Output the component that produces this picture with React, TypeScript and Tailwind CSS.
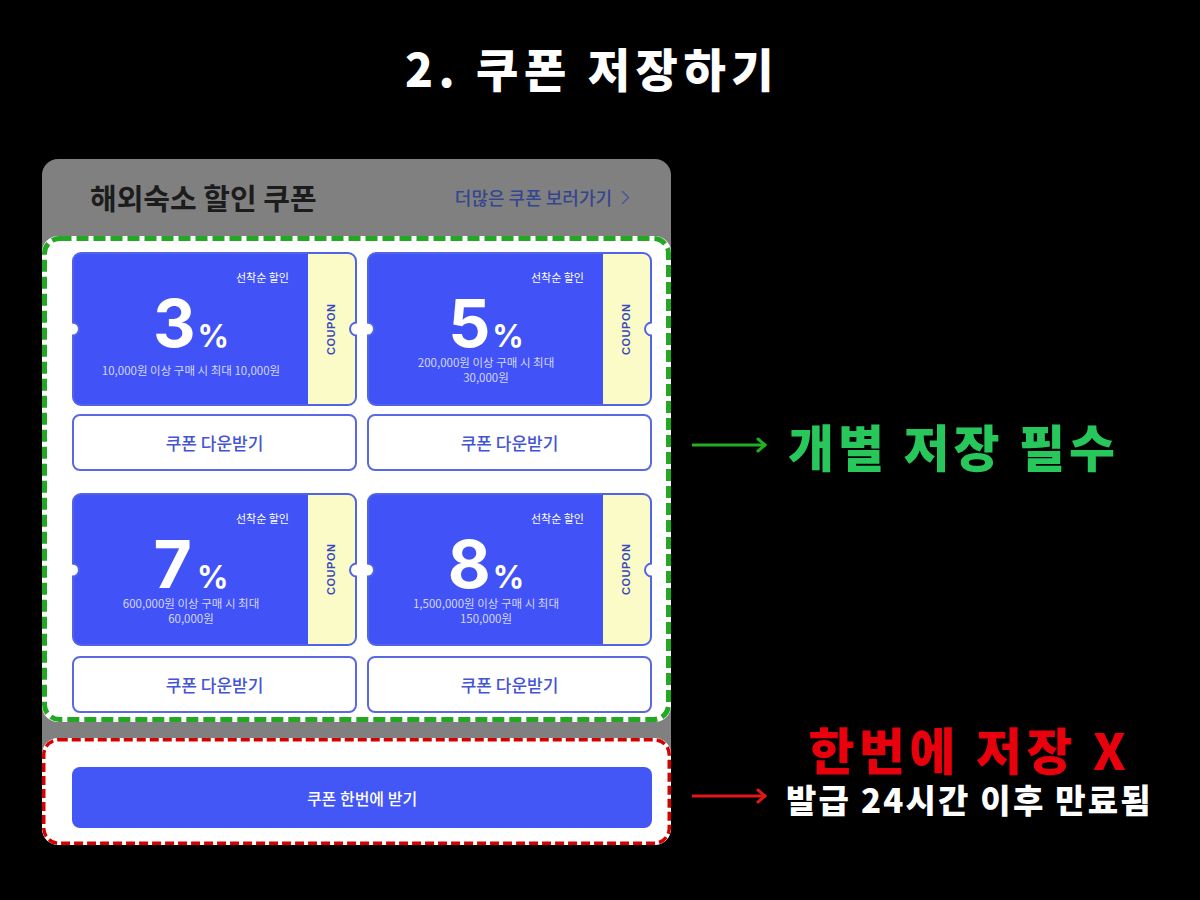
import React from "react";

const KR = { fontFamily: '"Noto Sans CJK KR", "Noto Sans", sans-serif' };
const NUM = { fontFamily: 'Inter, "Noto Sans CJK KR", sans-serif' };

type Coupon = { pct: string; lines: string[]; gap?: boolean };

const coupons: Coupon[] = [
  { pct: "3", lines: ["10,000원 이상 구매 시 최대 10,000원"] },
  { pct: "5", lines: ["200,000원 이상 구매 시 최대", "30,000원"] },
  { pct: "7", lines: ["600,000원 이상 구매 시 최대", "60,000원"], gap: true },
  { pct: "8", lines: ["1,500,000원 이상 구매 시 최대", "150,000원"] },
];

function Notch({ side }: { side: "left" | "right" }) {
  return side === "left" ? (
    <>
      <div className="absolute left-[-9px] top-1/2 -translate-y-1/2 w-[15px] h-[15px] rounded-full bg-white border-2 border-[#5264e6] z-10" />
      <div className="absolute left-[-10px] top-1/2 -translate-y-1/2 w-[8px] h-[18px] bg-white z-20" />
    </>
  ) : (
    <>
      <div className="absolute right-[-9px] top-1/2 -translate-y-1/2 w-[15px] h-[15px] rounded-full bg-white border-2 border-[#5264e6] z-10" />
      <div className="absolute right-[-10px] top-1/2 -translate-y-1/2 w-[8px] h-[18px] bg-white z-20" />
    </>
  );
}

function Ticket({ c, h }: { c: Coupon; h: string }) {
  return (
    <div className={`relative ${h} rounded-[9px] border-2 border-[#5264e6] bg-[#4152f6] flex`}>
      <Notch side="left" />
      <Notch side="right" />
      <div className="flex-1 flex flex-col pt-[15px]" style={KR}>
        <div className="text-right pr-[19px] text-[11px] leading-[16px] text-white">선착순 할인</div>
        <div className="flex items-baseline justify-center mt-[7px] h-[62px]" style={NUM}>
          <span className="text-[66px] leading-[62px] font-bold text-white">{c.pct}</span>
          <span className={`text-[31px] leading-[24px] font-bold text-white ${c.gap ? "ml-[5px]" : "ml-[2px]"}`}>%</span>
        </div>
        <div className="h-[32px] flex flex-col items-center justify-center text-center text-[11.5px] leading-[15px] text-[#d3d7ff]">
          {c.lines.map((l) => (
            <div key={l}>{l}</div>
          ))}
        </div>
      </div>
      <div className="w-[47px] bg-[#fbfbc8] rounded-r-[7px] flex items-center justify-center">
        <span
          className="-rotate-90 text-[11px] font-bold tracking-[0.5px] text-[#3a48bb] whitespace-nowrap"
          style={{ fontFamily: '"Liberation Sans", Arial, sans-serif' }}
        >
          COUPON
        </span>
      </div>
    </div>
  );
}

function DownButton() {
  return (
    <div
      className="h-[57px] rounded-[8px] border-2 border-[#5a69e2] bg-white flex items-center justify-center text-[17px] text-[#4654d4] font-medium"
      style={KR}
    >
      쿠폰 다운받기
    </div>
  );
}

function Arrow({ color }: { color: string }) {
  return (
    <svg width="76" height="16" viewBox="0 0 76 16" fill="none">
      <path d="M1 8H73" stroke={color} strokeWidth="3" strokeLinecap="round" />
      <path d="M66 2L73 8L66 14" stroke={color} strokeWidth="3" strokeLinecap="round" strokeLinejoin="round" />
    </svg>
  );
}

// dashed outline drawn over a box of known size
function DashedFrame({ w, h, stroke, width, dash, r }: { w: number; h: number; stroke: string; width: number; dash: string; r: number }) {
  const i = width / 2;
  return (
    <svg className="absolute inset-0 pointer-events-none" width={w} height={h} viewBox={`0 0 ${w} ${h}`} fill="none">
      <rect x={i} y={i} width={w - width} height={h - width} rx={r} stroke={stroke} strokeWidth={width} strokeDasharray={dash} />
    </svg>
  );
}

export default function App() {
  return (
    <div className="w-[1200px] h-[900px] bg-black overflow-hidden" style={KR}>
      <h1 className="pt-[35px] pr-[16px] text-center text-[46px] leading-[64px] font-black text-white tracking-[5.5px]">
        2. 쿠폰 저장하기
      </h1>

      <div className="flex mt-[60px]">
        {/* coupon panel */}
        <div className="ml-[42px] w-[629px] bg-[#808080] rounded-[16px] overflow-hidden">
          <div className="h-[77px] flex items-center justify-between pl-[48px] pr-[41px]">
            <span className="text-[29px] font-bold text-[#1c1c1c] leading-none">해외숙소 할인 쿠폰</span>
            <span className="flex items-center gap-[9px] text-[18px] text-[#34468f] font-medium">
              더많은 쿠폰 보러가기
              <svg width="9" height="15" viewBox="0 0 9 15" fill="none">
                <path d="M1.5 1.5L7.5 7.5L1.5 13.5" stroke="#4a5a96" strokeWidth="1.6" strokeLinecap="round" strokeLinejoin="round" />
              </svg>
            </span>
          </div>

          <div className="relative h-[486px] bg-white rounded-[16px] pl-[30px] pr-[19px] pt-[16px]">
            <DashedFrame w={629} h={486} stroke="#22a822" width={5} dash="12 5" r={15} />
            <div className="grid grid-cols-2 gap-x-[10px]">
              <div className="flex flex-col gap-[8px]">
                <Ticket c={coupons[0]} h="h-[154px]" />
                <DownButton />
              </div>
              <div className="flex flex-col gap-[8px]">
                <Ticket c={coupons[1]} h="h-[154px]" />
                <DownButton />
              </div>
            </div>
            <div className="grid grid-cols-2 gap-x-[10px] mt-[22px]">
              <div className="flex flex-col gap-[10px]">
                <Ticket c={coupons[2]} h="h-[153px]" />
                <DownButton />
              </div>
              <div className="flex flex-col gap-[10px]">
                <Ticket c={coupons[3]} h="h-[153px]" />
                <DownButton />
              </div>
            </div>
          </div>

          <div className="h-[16px]" />

          <div className="relative bg-white rounded-[16px] h-[107px] pl-[30px] pr-[19px] pt-[29px]">
            <DashedFrame w={629} h={107} stroke="#d60000" width={3.5} dash="9 4" r={15} />
            <div className="h-[61px] rounded-[8px] bg-[#4356f6] flex items-center justify-center text-[16px] text-white font-medium">
              쿠폰 한번에 받기
            </div>
          </div>
        </div>

        {/* annotations */}
        <div className="pl-[21px] flex flex-col">
          <div className="mt-[261px] h-[50px] flex items-center">
            <Arrow color="#22b022" />
            <span className="ml-[20px] text-[50px] leading-[50px] font-black text-[#27c75c] tracking-[4px]">
              개별 저장 필수
            </span>
          </div>

          <div className="mt-[253px] flex items-end">
            <div className="mb-[12px]">
              <Arrow color="#e01818" />
            </div>
            <div className="ml-[18px] flex flex-col items-center">
              <span className="text-[50px] leading-[50px] font-black text-[#e8000c] tracking-[4.5px]">한번에 저장 X</span>
              <span className="mt-[9px] text-[33px] leading-[34px] font-black text-white tracking-[2.2px]">
                발급 24시간 이후 만료됨
              </span>
            </div>
          </div>
        </div>
      </div>
    </div>
  );
}
